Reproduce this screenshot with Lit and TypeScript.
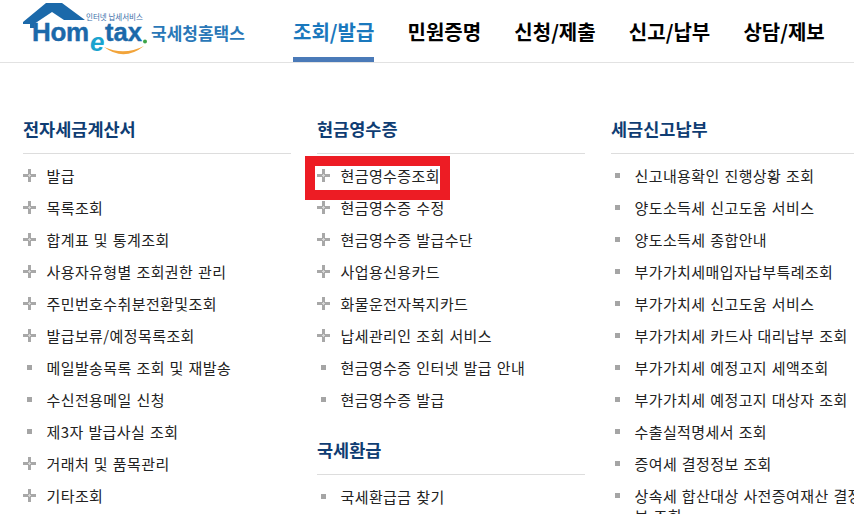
import { html, css, LitElement } from 'lit';
import { customElement } from 'lit/decorators.js';

type Item = { label: string; plus?: boolean; marked?: boolean };
type Group = { title: string; items: Item[] };

const plus = (label: string): Item => ({ label, plus: true });
const dot = (label: string): Item => ({ label });

const COLUMNS: Group[][] = [
  [
    {
      title: '전자세금계산서',
      items: [
        plus('발급'),
        plus('목록조회'),
        plus('합계표 및 통계조회'),
        plus('사용자유형별 조회권한 관리'),
        plus('주민번호수취분전환및조회'),
        plus('발급보류/예정목록조회'),
        dot('메일발송목록 조회 및 재발송'),
        dot('수신전용메일 신청'),
        dot('제3자 발급사실 조회'),
        plus('거래처 및 품목관리'),
        plus('기타조회'),
      ],
    },
  ],
  [
    {
      title: '현금영수증',
      items: [
        { label: '현금영수증조회', plus: true, marked: true },
        plus('현금영수증 수정'),
        plus('현금영수증 발급수단'),
        plus('사업용신용카드'),
        plus('화물운전자복지카드'),
        plus('납세관리인 조회 서비스'),
        dot('현금영수증 인터넷 발급 안내'),
        dot('현금영수증 발급'),
      ],
    },
    { title: '국세환급', items: [dot('국세환급금 찾기')] },
  ],
  [
    {
      title: '세금신고납부',
      items: [
        dot('신고내용확인 진행상황 조회'),
        dot('양도소득세 신고도움 서비스'),
        dot('양도소득세 종합안내'),
        dot('부가가치세매입자납부특례조회'),
        dot('부가가치세 신고도움 서비스'),
        dot('부가가치세 카드사 대리납부 조회'),
        dot('부가가치세 예정고지 세액조회'),
        dot('부가가치세 예정고지 대상자 조회'),
        dot('수출실적명세서 조회'),
        dot('증여세 결정정보 조회'),
        dot('상속세 합산대상 사전증여재산 결정정보 조회'),
      ],
    },
  ],
];

const TABS = ['조회/발급', '민원증명', '신청/제출', '신고/납부', '상담/제보'];

@customElement('app-root')
export class AppRoot extends LitElement {
  static styles = css`
    :host {
      display: block;
      width: 854px;
      height: 514px;
      overflow: hidden;
      background: #fff;
      font-family: 'Noto Sans CJK KR', 'Noto Sans', sans-serif;
      color: #222;
    }
    .header {
      display: flex;
      height: 62px;
      border-bottom: 1px solid #e2e2e2;
    }
    .logo {
      display: block;
      width: 293px;
      height: 62px;
      flex: none;
    }
    .tabs {
      display: flex;
      gap: 33.2px;
    }
    .tab {
      height: 62px;
      box-sizing: border-box;
      padding-top: 17px;
      font-size: 20px;
      line-height: 30px;
      font-weight: 700;
      color: #000;
      white-space: nowrap;
    }
    .tab.active {
      color: #1a78bd;
      border-bottom: 5px solid #4a7ab8;
    }
    .columns {
      display: flex;
      gap: 26px;
      padding: 53px 0 0 23px;
    }
    .column {
      width: 268px;
      flex: none;
    }
    .group + .group {
      margin-top: 22px;
    }
    .title {
      height: 37px;
      border-bottom: 1px solid #ddd;
      margin-bottom: 5px;
      font-size: 17.5px;
      line-height: 26px;
      font-weight: 700;
      color: #0f3d73;
    }
    .item {
      position: relative;
      display: flex;
      gap: 10.5px;
      min-height: 32px;
      font-size: 15px;
      letter-spacing: 0.4px;
      word-spacing: 1px;
      color: #222;
    }
    .label {
      height: 32px;
      line-height: 34px;
    }
    .label.wrap {
      height: auto;
      line-height: 20px;
      padding-top: 7px;
    }
    .mark {
      flex: none;
      width: 13px;
      height: 32px;
      display: flex;
      align-items: center;
      justify-content: center;
    }
    .mark svg {
      display: block;
    }
    .square {
      width: 5px;
      height: 5px;
      background: #a5a5a5;
    }
    .highlight {
      position: absolute;
      left: -12px;
      top: -3px;
      width: 145px;
      height: 44px;
      box-sizing: border-box;
      border: 10px solid #ed1c24;
    }
  `;

  renderLogo() {
    return html`<svg class="logo" viewBox="0 0 293 62" aria-label="Hometax 국세청홈택스">
      <path d="M23 22 L46 3 H62 L85 20 H64 L52 12 L34 24 V28 H30 V24 H23 Z" fill="#1b69aa" />
      <text x="86" y="19.500" font-size="7.500" fill="#3a6ea8" font-family="Noto Sans CJK KR">인터넷 납세서비스</text>
      <text x="32" y="41" font-size="26" font-weight="700" letter-spacing="-.3" fill="#1b69aa" stroke="#1b69aa" stroke-width=".4" font-family="Liberation Sans">Hom</text>
      <text x="90" y="51" font-size="26" font-weight="700" font-style="italic" fill="#1aa4cf" font-family="Liberation Sans">e</text>
      <text x="105" y="41" font-size="25.500" font-weight="700" fill="#1b69aa" stroke="#1b69aa" stroke-width=".4" font-family="Liberation Sans">tax</text>
      <circle cx="145" cy="41.500" r="2" fill="#3da447" />
      <path d="M104 47 Q124 62 144 46 Q124 56 104 47 Z" fill="#f2a43a" />
      <text x="151" y="40" font-size="17" font-weight="700" fill="#2a78b8" font-family="Noto Sans CJK KR">국세청홈택스</text>
    </svg>`;
  }

  renderItem(item: Item) {
    const long = item.label.length > 20;
    return html`<div class="item">
      <span class="mark">
        ${item.plus
          ? html`<svg width="13" height="13" viewBox="0 0 13 13">
              <path d="M5 0h3v5h5v3H8v5H5V8H0V5h5z" fill="#a8a8a8" />
              <path d="M6 5h1v3H6zM5 6h3v1H5z" fill="#d8d8d8" />
            </svg>`
          : html`<span class="square"></span>`}
      </span>
      <span class="label ${long ? 'wrap' : ''}">${item.label}</span>
      ${item.marked ? html`<span class="highlight"></span>` : ''}
    </div>`;
  }

  render() {
    return html`
      <div class="header">
        ${this.renderLogo()}
        <nav class="tabs">
          ${TABS.map(
            (t, i) => html`<div class="tab ${i === 0 ? 'active' : ''}">${t}</div>`
          )}
        </nav>
      </div>
      <div class="columns">
        ${COLUMNS.map(
          (col) => html`<div class="column">
            ${col.map(
              (g) => html`<div class="group">
                <div class="title">${g.title}</div>
                ${g.items.map((it) => this.renderItem(it))}
              </div>`
            )}
          </div>`
        )}
      </div>
    `;
  }
}
